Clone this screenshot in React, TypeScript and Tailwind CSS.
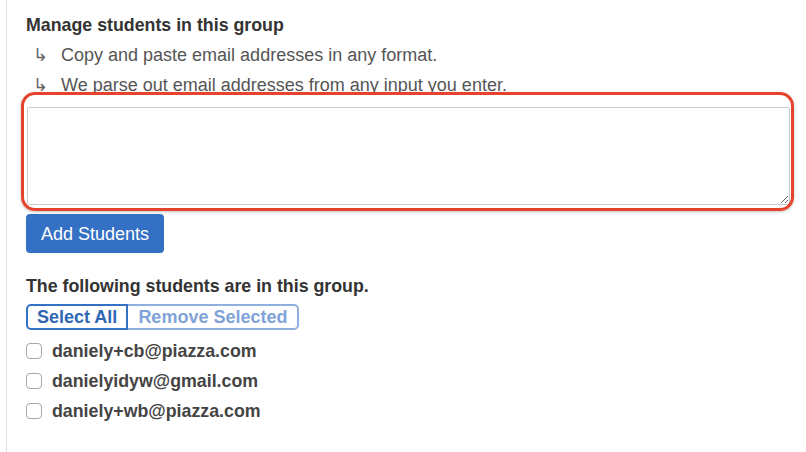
export default function App() {
  const students = ['daniely+cb@piazza.com', 'danielyidyw@gmail.com', 'daniely+wb@piazza.com']

  return (
    <div className="w-[806px] h-[452px] bg-white overflow-hidden" style={{ fontFamily: '"Liberation Sans", Arial, sans-serif' }}>
      <div className="ml-[6px] h-full border-l border-[#dcdfe4] pl-[19px] pr-[14px] pt-[15px]">
        {/* Manage header */}
        <h3 className="text-[17.8px] font-bold text-[#333] leading-[20px]">Manage students in this group</h3>
        <div className="mt-[10px] flex flex-col gap-[10px] text-[18px] text-[#555] leading-[20px]">
          <div className="flex items-center">
            <span className="w-[35px] pl-[7px] text-[#666]">↳</span>
            <span>Copy and paste email addresses in any format.</span>
          </div>
          <div className="flex items-center">
            <span className="w-[35px] pl-[7px] text-[#666]">↳</span>
            <span>We parse out email addresses from any input you enter.</span>
          </div>
        </div>

        {/* Textarea with annotation */}
        <div className="relative mt-[12px] ml-[1px]">
          <textarea className="block w-[763px] h-[98px] border border-[#c9cdd2] rounded-[2px] bg-white resize-y outline-none" />
          <div className="absolute left-[-6px] top-[-15px] w-[773px] h-[119px] border-[3.5px] border-[#e5432b] rounded-[14px] pointer-events-none shadow-[0_1px_3px_rgba(0,0,0,0.25)]" />
        </div>

        <button className="mt-[9px] h-[39px] px-[15px] rounded-[4px] bg-[#3470c3] text-white text-[18px] leading-[20px]">
          Add Students
        </button>

        <h4 className="mt-[23px] text-[17.8px] font-bold text-[#333] leading-[20px]">The following students are in this group.</h4>
        <div className="mt-[8px] flex h-[26px]">
          <button className="px-[9px] border-2 border-[#3470c3] rounded-l-[5px] text-[#2f67b5] font-bold text-[18px] leading-[20px]">
            Select All
          </button>
          <button className="px-[10px] border-2 border-l-0 border-[#8fb0de] rounded-r-[5px] text-[#7fa3d9] font-bold text-[18px] leading-[20px]">
            Remove Selected
          </button>
        </div>

        <div className="mt-[11px] flex flex-col gap-[10px]">
          {students.map((s) => (
            <label key={s} className="flex items-center gap-[10px]">
              <span className="w-[16px] h-[16px] rounded-[4px] border-[1.5px] border-[#a3a8b0] bg-white" />
              <span className="text-[17.8px] font-bold text-[#444] leading-[20px]">{s}</span>
            </label>
          ))}
        </div>
      </div>
    </div>
  )
}
